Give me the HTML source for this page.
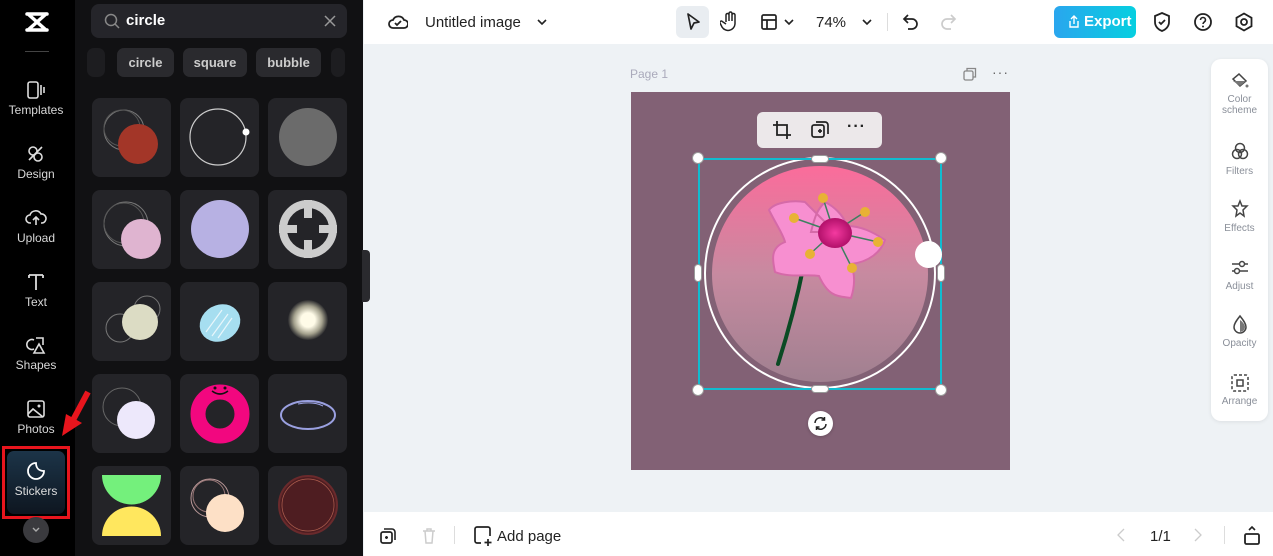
<!DOCTYPE html>
<html><head><meta charset="utf-8"><style>
*{box-sizing:border-box;margin:0;padding:0}
body{width:1273px;height:556px;overflow:hidden;font-family:"Liberation Sans",sans-serif;background:#eef2f5;position:relative}
.abs{position:absolute}
.rail{left:0;top:0;width:75px;height:556px;background:#000}
.ri{position:absolute;left:0;width:72px;text-align:center;color:#d8d8d8;font-size:12px}
.ri svg{display:block;margin:0 auto 3px}
.panel{left:75px;top:0;width:288px;height:556px;background:#111113}
.cell{position:absolute;width:79px;height:79px;background:#242428;border-radius:8px;overflow:hidden}
.chip{position:absolute;top:48px;height:29px;background:#2a2a2e;border-radius:7px;color:#ccc;font-size:13px;font-weight:bold;line-height:29px;text-align:center}
.top{left:364px;top:0;width:909px;height:44px;background:#fff}
.bot{left:364px;top:512px;width:909px;height:44px;background:#fff}
.rp{left:1211px;top:59px;width:57px;height:362px;background:#fff;border-radius:10px;box-shadow:0 1px 4px rgba(0,0,0,.08)}
.rpi{position:absolute;left:0;width:57px;text-align:center;font-size:10px;color:#8a8f99;line-height:11px}
.rpi svg{display:block;margin:0 auto 3px}
.h{position:absolute;width:12px;height:12px;border-radius:50%;background:#fff;border:1px solid #999}
</style></head><body>

<div class="abs rail">
 <svg class="abs" style="left:24px;top:10px" width="26" height="24" viewBox="0 0 26 24"><path d="M3 4h20M3 20h20M4 4l18 16M22 4L4 20" stroke="#fff" stroke-width="3.5" fill="none" stroke-linecap="round"/></svg>
 <div class="abs" style="left:25px;top:51px;width:24px;height:1px;background:#444"></div>
 <div class="ri" style="top:80px"><svg width="22" height="20" viewBox="0 0 22 20"><rect x="3" y="2" width="10" height="16" rx="2" stroke="#ddd" stroke-width="1.6" fill="none"/><path d="M16 5v10M19 7v6" stroke="#ddd" stroke-width="1.6"/></svg>Templates</div>
 <div class="ri" style="top:144px"><svg width="22" height="20" viewBox="0 0 22 20"><circle cx="8" cy="7" r="4" stroke="#ddd" stroke-width="1.6" fill="none"/><circle cx="13" cy="13" r="4" stroke="#ddd" stroke-width="1.6" fill="none"/><path d="M4 16L17 3" stroke="#ddd" stroke-width="1.6"/></svg>Design</div>
 <div class="ri" style="top:208px"><svg width="22" height="20" viewBox="0 0 22 20"><path d="M6 15H5a4 4 0 010-8 6 6 0 0111-1 4 4 0 011 9h-1M11 17V9M8 12l3-3 3 3" stroke="#ddd" stroke-width="1.6" fill="none"/></svg>Upload</div>
 <div class="ri" style="top:272px"><svg width="22" height="20" viewBox="0 0 22 20"><path d="M4 3h14M11 3v15M4 3v3M18 3v3" stroke="#ddd" stroke-width="1.8" fill="none"/></svg>Text</div>
 <div class="ri" style="top:335px"><svg width="22" height="20" viewBox="0 0 22 20"><path d="M9 5a5 5 0 100 9M11 3h7v7M14 9l5 9H9z" stroke="#ddd" stroke-width="1.6" fill="none"/></svg>Shapes</div>
 <div class="ri" style="top:399px"><svg width="22" height="20" viewBox="0 0 22 20"><rect x="3" y="2" width="16" height="16" rx="2" stroke="#ddd" stroke-width="1.6" fill="none"/><path d="M3 15l5-5 10 8" stroke="#ddd" stroke-width="1.6" fill="none"/><circle cx="14" cy="7" r="1.5" fill="#ddd"/></svg>Photos</div>
 <div class="abs" style="left:2px;top:446px;width:68px;height:73px;border:3px solid #e8151d"></div>
 <div class="abs" style="left:7px;top:451px;width:58px;height:63px;border-radius:7px;background:linear-gradient(#1c3448,#0e1620)"></div>
 <div class="ri" style="top:461px"><svg width="22" height="20" viewBox="0 0 22 20"><path d="M11 2a8 8 0 108 8c-5 0-8-3-8-8z" stroke="#fff" stroke-width="1.8" fill="none"/></svg><span style="color:#ddd">Stickers</span></div>
 <div class="abs" style="left:23px;top:517px;width:26px;height:26px;border-radius:50%;background:#3a3a3e"></div>
 <svg class="abs" style="left:31px;top:525px" width="10" height="10"><path d="M2 3l3 3 3-3" stroke="#aaa" stroke-width="1.4" fill="none"/></svg>
</div>

<div class="abs panel">
 <div class="abs" style="left:16px;top:4px;width:256px;height:34px;background:#25252a;border-radius:8px"></div>
 <svg class="abs" style="left:29px;top:13px" width="16" height="16"><circle cx="7" cy="7" r="5.5" stroke="#888" stroke-width="1.5" fill="none"/><path d="M11 11l4 4" stroke="#888" stroke-width="1.5"/></svg>
 <div class="abs" style="left:51px;top:12px;color:#fff;font-size:15px;font-weight:bold">circle</div>
 <svg class="abs" style="left:249px;top:15px" width="12" height="12"><path d="M1 1l10 10M11 1L1 11" stroke="#999" stroke-width="1.5"/></svg>
 <div class="chip" style="left:12px;width:18px;opacity:.5"></div>
 <div class="chip" style="left:42px;width:57px">circle</div>
 <div class="chip" style="left:108px;width:64px">square</div>
 <div class="chip" style="left:181px;width:65px">bubble</div>
 <div class="chip" style="left:256px;width:14px;opacity:.5"></div>

 <div class="cell" style="left:17px;top:98px"><svg width="79" height="79"><circle cx="32" cy="32" r="20" stroke="#777" fill="none"/><circle cx="30" cy="30" r="18" stroke="#555" fill="none"/><circle cx="46" cy="46" r="20" fill="#a33628"/></svg></div>
 <div class="cell" style="left:105px;top:98px"><svg width="79" height="79"><circle cx="38" cy="39" r="28" stroke="#ccc" stroke-width="1.2" fill="none"/><circle cx="66" cy="34" r="3.5" fill="#fff"/></svg></div>
 <div class="cell" style="left:193px;top:98px"><svg width="79" height="79"><circle cx="40" cy="39" r="29" fill="#6b6b6b"/></svg></div>

 <div class="cell" style="left:17px;top:190px"><svg width="79" height="79"><circle cx="34" cy="34" r="22" stroke="#777" fill="none"/><circle cx="32" cy="33" r="20" stroke="#555" fill="none"/><circle cx="49" cy="49" r="20" fill="#dfb4d0"/></svg></div>
 <div class="cell" style="left:105px;top:190px"><svg width="79" height="79"><circle cx="40" cy="39" r="29" fill="#b7b1e3"/></svg></div>
 <div class="cell" style="left:193px;top:190px"><svg width="79" height="79"><circle cx="40" cy="39" r="25" stroke="#ccc" stroke-width="8" fill="none"/><path d="M40 10v18M40 50v18M11 39h18M51 39h18" stroke="#ccc" stroke-width="8"/></svg></div>

 <div class="cell" style="left:17px;top:282px"><svg width="79" height="79"><circle cx="55" cy="27" r="13" stroke="#777" fill="none"/><circle cx="28" cy="46" r="14" stroke="#777" fill="none"/><circle cx="48" cy="40" r="18" fill="#dcdcc4"/></svg></div>
 <div class="cell" style="left:105px;top:282px"><svg width="79" height="79"><ellipse cx="40" cy="41" rx="21" ry="18" fill="#a6def0" transform="rotate(-30 40 41)"/><path d="M26 50l16-22M32 54l16-22M38 56l14-20" stroke="#e8f6fb" stroke-width="1.2"/></svg></div>
 <div class="cell" style="left:193px;top:282px"><div style="position:absolute;left:20px;top:18px;width:40px;height:40px;border-radius:50%;background:radial-gradient(#fffbe8 25%,rgba(250,245,210,.6) 50%,rgba(36,36,40,0) 72%)"></div></div>

 <div class="cell" style="left:17px;top:374px"><svg width="79" height="79"><circle cx="30" cy="33" r="19" stroke="#666" fill="none"/><circle cx="44" cy="46" r="19" fill="#ede8fb"/></svg></div>
 <div class="cell" style="left:105px;top:374px"><svg width="79" height="79"><circle cx="40" cy="40" r="22" stroke="#f2077f" stroke-width="15" fill="none"/><circle cx="35" cy="14" r="1.5" fill="#111"/><circle cx="45" cy="14" r="1.5" fill="#111"/><path d="M32 17q8 6 16 0" stroke="#111" stroke-width="1.6" fill="none"/></svg></div>
 <div class="cell" style="left:193px;top:374px"><svg width="79" height="79"><ellipse cx="40" cy="41" rx="27" ry="14" stroke="#9aa0e0" stroke-width="2" fill="none"/><path d="M30 30q15-3 25 2" stroke="#9aa0e0" fill="none"/></svg></div>

 <div class="cell" style="left:17px;top:466px"><svg width="79" height="79"><path d="M10 9h59a29 29 0 01-59 0z" fill="#74f07c"/><path d="M10 70h59a29 29 0 00-59 0z" fill="#ffe75e"/></svg></div>
 <div class="cell" style="left:105px;top:466px"><svg width="79" height="79"><circle cx="30" cy="32" r="19" stroke="#b99" fill="none"/><circle cx="29" cy="30" r="16" stroke="#977" fill="none"/><circle cx="45" cy="47" r="19" fill="#fde0c6"/></svg></div>
 <div class="cell" style="left:193px;top:466px"><svg width="79" height="79"><circle cx="40" cy="39" r="29" fill="#4e1d21" stroke="#6a2a2c" stroke-width="2"/><circle cx="40" cy="39" r="26" stroke="#b06050" stroke-width=".7" fill="none"/></svg></div>
</div>
<svg class="abs" style="left:60px;top:388px" width="34" height="52"><path d="M28 4L12 34" stroke="#e8151d" stroke-width="6"/><path d="M2 48L6 26l16 9z" fill="#e8151d"/></svg>
<div class="abs" style="left:362px;top:250px;width:8px;height:52px;background:#2a2a2e;border-radius:0 4px 4px 0"></div>

<div class="abs top">
 <svg class="abs" style="left:24px;top:12px" width="20" height="20" viewBox="0 0 20 20"><path d="M5 16a4 4 0 010-8 6 6 0 0111 0 4 4 0 010 8z" stroke="#222" stroke-width="1.8" fill="none"/><path d="M7 11l2 2 4-4" stroke="#222" stroke-width="1.8" fill="none"/></svg>
 <div class="abs" style="left:61px;top:14px;font-size:15px;color:#222">Untitled image</div>
 <svg class="abs" style="left:172px;top:17px" width="12" height="10"><path d="M2 3l4 4 4-4" stroke="#222" stroke-width="1.6" fill="none"/></svg>
 <div class="abs" style="left:312px;top:6px;width:33px;height:32px;background:#e9edf1;border-radius:6px"></div>
 <svg class="abs" style="left:320px;top:12px" width="18" height="20"><path d="M4 2l11 8-5 1-3 6z" stroke="#222" stroke-width="1.7" fill="none" stroke-linejoin="round"/></svg>
 <svg class="abs" style="left:356px;top:11px" width="20" height="22" viewBox="0 0 20 22"><path d="M6 11V4a1.5 1.5 0 013 0v6V2.5a1.5 1.5 0 013 0V10V4a1.5 1.5 0 013 0v9a7 7 0 01-13 3l-2-4a1.4 1.4 0 012.4-1.4L6 13" stroke="#222" stroke-width="1.5" fill="none"/></svg>
 <svg class="abs" style="left:396px;top:13px" width="18" height="18"><rect x="2" y="2" width="14" height="14" rx="1.5" stroke="#222" stroke-width="1.7" fill="none"/><path d="M2 7h14M7 7v9" stroke="#222" stroke-width="1.7"/></svg>
 <svg class="abs" style="left:419px;top:17px" width="12" height="10"><path d="M2 3l4 4 4-4" stroke="#222" stroke-width="1.6" fill="none"/></svg>
 <div class="abs" style="left:452px;top:14px;font-size:15px;color:#222">74%</div>
 <svg class="abs" style="left:497px;top:17px" width="12" height="10"><path d="M2 3l4 4 4-4" stroke="#222" stroke-width="1.6" fill="none"/></svg>
 <div class="abs" style="left:523px;top:13px;width:1px;height:18px;background:#ddd"></div>
 <svg class="abs" style="left:538px;top:12px" width="18" height="20"><path d="M6 3L2 7l4 4M2 7h8a5 5 0 010 10H6" stroke="#222" stroke-width="1.7" fill="none"/></svg>
 <svg class="abs" style="left:575px;top:12px" width="18" height="20"><path d="M12 3l4 4-4 4M16 7H8a5 5 0 000 10h4" stroke="#ccc" stroke-width="1.7" fill="none"/></svg>
 <div class="abs" style="left:690px;top:6px;width:82px;height:32px;border-radius:6px;background:linear-gradient(90deg,#2aa6ee,#06cfe0);color:#fff;font-weight:bold;font-size:15px;line-height:32px;padding-left:30px">Export</div>
 <svg class="abs" style="left:703px;top:14px" width="14" height="15"><path d="M3 7v6h8V7M7 10V2M4 5l3-3 3 3" stroke="#fff" stroke-width="1.4" fill="none"/></svg>
 <svg class="abs" style="left:788px;top:11px" width="20" height="22"><path d="M10 2l7 3v6c0 5-4 8-7 9-3-1-7-4-7-9V5z" stroke="#222" stroke-width="1.8" fill="none"/><path d="M7 11l2 2 4-4" stroke="#222" stroke-width="1.8" fill="none"/></svg>
 <svg class="abs" style="left:829px;top:12px" width="20" height="20"><circle cx="10" cy="10" r="8" stroke="#222" stroke-width="1.8" fill="none"/><path d="M7.5 8a2.5 2.5 0 115 0c0 2-2.5 2-2.5 4" stroke="#222" stroke-width="1.6" fill="none"/><circle cx="10" cy="14.5" r="1" fill="#222"/></svg>
 <svg class="abs" style="left:870px;top:12px" width="20" height="20"><path d="M10 1.5l7.5 4.3v8.4L10 18.5l-7.5-4.3V5.8z" stroke="#222" stroke-width="1.8" fill="none"/><circle cx="10" cy="10" r="3" stroke="#222" stroke-width="1.8" fill="none"/></svg>
</div>

<div class="abs" style="left:630px;top:67px;font-size:12px;color:#aab">Page 1</div>
<svg class="abs" style="left:963px;top:67px" width="14" height="14"><rect x="1" y="4" width="9" height="9" rx="1.5" stroke="#888" stroke-width="1.3" fill="none"/><path d="M4 4V1.5h8.5V10H10" stroke="#888" stroke-width="1.3" fill="none"/></svg>
<div class="abs" style="left:992px;top:64px;font-size:14px;color:#666;letter-spacing:1px">···</div>

<div class="abs" style="left:631px;top:92px;width:379px;height:378px;background:#826175"></div>
<svg class="abs" style="left:631px;top:92px" width="379" height="378">
 <defs><linearGradient id="g" x1="0" y1="0" x2="0" y2="1"><stop offset="0" stop-color="#fb6c9b"/><stop offset=".5" stop-color="#c78aa0"/><stop offset="1" stop-color="#a08090"/></linearGradient>
 <radialGradient id="c"><stop offset="0" stop-color="#f43aa0"/><stop offset="1" stop-color="#b2106a"/></radialGradient></defs>
 <circle cx="189" cy="181" r="115" stroke="#fff" stroke-width="2" fill="none"/>
 <circle cx="189" cy="182" r="108" fill="url(#g)"/>
 <path d="M173 172q-10 50-26 100" stroke="#0b4a24" stroke-width="4" fill="none" stroke-linecap="round"/>
 <path d="M204 140l-30-30c-12-2-30 0-36 8 8 16 14 24 16 32-16 6-12 20-10 30 14 6 32 2 44 4 10 22 20 20 32 22 4-12 4-24 0-34 18-2 30-12 34-24-12-8-24-14-38-14-4-12-14-20-22-24-8 8-10 14-14 30z" fill="#f78fd0" stroke="#d56aa8" stroke-width="2"/>
 <g stroke="#3d8060" stroke-width="1.5"><path d="M203 140L192 106M203 140l31-20M203 140l-40-14M203 140l44 10M203 140l-24 22M203 140l18 36"/></g>
 <g fill="#e8b235"><circle cx="192" cy="106" r="5"/><circle cx="234" cy="120" r="5"/><circle cx="163" cy="126" r="5"/><circle cx="247" cy="150" r="5"/><circle cx="179" cy="162" r="5"/><circle cx="221" cy="176" r="5"/></g>
 <ellipse cx="204" cy="141" rx="17" ry="15" fill="url(#c)"/>
</svg>
<div class="abs" style="left:757px;top:112px;width:125px;height:36px;background:#ece8ea;border-radius:6px"></div>
<svg class="abs" style="left:772px;top:120px" width="20" height="20"><path d="M5 1v14h14M1 5h14v14" stroke="#222" stroke-width="1.8" fill="none"/></svg>
<svg class="abs" style="left:810px;top:120px" width="20" height="20"><rect x="2" y="5" width="12" height="12" rx="2" stroke="#222" stroke-width="1.7" fill="none"/><path d="M6 2h9a3 3 0 013 3v9M8 11h4M10 9v4" stroke="#222" stroke-width="1.7" fill="none"/></svg>
<div class="abs" style="left:847px;top:118px;font-size:16px;font-weight:bold;color:#222;letter-spacing:1px">···</div>

<div class="abs" style="left:698px;top:158px;width:244px;height:232px;border:2px solid #12bcd0"></div>
<div class="h" style="left:692px;top:152px"></div><div class="h" style="left:935px;top:152px"></div>
<div class="h" style="left:692px;top:384px"></div><div class="h" style="left:935px;top:384px"></div>
<div class="abs" style="left:811px;top:155px;width:18px;height:8px;border-radius:4px;background:#fff;border:1px solid #999"></div>
<div class="abs" style="left:811px;top:385px;width:18px;height:8px;border-radius:4px;background:#fff;border:1px solid #999"></div>
<div class="abs" style="left:694px;top:264px;width:8px;height:18px;border-radius:4px;background:#fff;border:1px solid #999"></div>
<div class="abs" style="left:937px;top:264px;width:8px;height:18px;border-radius:4px;background:#fff;border:1px solid #999"></div>
<div class="abs" style="left:915px;top:241px;width:27px;height:27px;border-radius:50%;background:#fff"></div>
<div class="abs" style="left:808px;top:411px;width:25px;height:25px;border-radius:50%;background:#fff;box-shadow:0 1px 3px rgba(0,0,0,.2)"></div>
<svg class="abs" style="left:813px;top:416px" width="15" height="15"><path d="M2 7a5.5 5.5 0 019.5-3.5M13 8a5.5 5.5 0 01-9.5 3.5M11.5 1v3h-3M3.5 14v-3h3" stroke="#222" stroke-width="1.5" fill="none"/></svg>

<div class="abs rp">
 <div class="rpi" style="top:12px"><svg width="20" height="20"><path d="M9 3l7 7-6 5-7-7z" stroke="#444" stroke-width="1.5" fill="none"/><path d="M3 10h13l-6 5z" fill="#777"/><circle cx="17" cy="15" r="1.5" fill="#777"/></svg>Color<br>scheme</div>
 <div class="rpi" style="top:82px"><svg width="20" height="22"><circle cx="10" cy="7" r="4.5" stroke="#444" stroke-width="1.5" fill="none"/><circle cx="7" cy="13" r="4.5" stroke="#444" stroke-width="1.5" fill="none"/><circle cx="13" cy="13" r="4.5" stroke="#444" stroke-width="1.5" fill="none"/></svg>Filters</div>
 <div class="rpi" style="top:140px"><svg width="20" height="21"><path d="M10 2l2 5 5 0-4 4 1 6-4-3-4 3 1-6-4-4 5 0z" stroke="#444" stroke-width="1.5" fill="none"/></svg>Effects</div>
 <div class="rpi" style="top:198px"><svg width="20" height="21"><path d="M2 7h16M2 14h16" stroke="#444" stroke-width="1.5"/><circle cx="12" cy="7" r="2.5" fill="#fff" stroke="#444" stroke-width="1.5"/><circle cx="7" cy="14" r="2.5" fill="#fff" stroke="#444" stroke-width="1.5"/></svg>Adjust</div>
 <div class="rpi" style="top:255px"><svg width="20" height="21"><path d="M10 2c4 5 6 8 6 11a6 6 0 01-12 0c0-3 2-6 6-11z" stroke="#444" stroke-width="1.5" fill="none"/><path d="M10 6v12a5 5 0 005-5c0-2-2-5-5-7z" fill="#777"/></svg>Opacity</div>
 <div class="rpi" style="top:313px"><svg width="20" height="21"><rect x="2" y="3" width="16" height="16" rx="2" stroke="#444" stroke-width="1.5" stroke-dasharray="3 2" fill="none"/><rect x="7" y="8" width="6" height="6" stroke="#444" stroke-width="1.5" fill="none"/></svg>Arrange</div>
</div>

<div class="abs bot">
 <svg class="abs" style="left:15px;top:15px" width="18" height="18"><rect x="2" y="5" width="11" height="11" rx="2" stroke="#222" stroke-width="1.7" fill="none"/><path d="M5 2h8a3 3 0 013 3v8M6 10.5h3M7.5 9v3" stroke="#222" stroke-width="1.6" fill="none"/></svg>
 <svg class="abs" style="left:57px;top:15px" width="16" height="18"><path d="M2 4h12M6 4V2h4v2M4 4l1 12h6l1-12" stroke="#ccc" stroke-width="1.5" fill="none"/></svg>
 <div class="abs" style="left:90px;top:14px;width:1px;height:18px;background:#ddd"></div>
 <svg class="abs" style="left:109px;top:13px" width="20" height="22"><path d="M8 18H4a2 2 0 01-2-2V4a2 2 0 012-2h11a2 2 0 012 2v7M15 14v7M11.5 17.5h7" stroke="#222" stroke-width="1.7" fill="none"/></svg>
 <div class="abs" style="left:133px;top:16px;font-size:15px;color:#222">Add page</div>
 <svg class="abs" style="left:752px;top:16px" width="10" height="14"><path d="M8 1L2 7l6 6" stroke="#ccc" stroke-width="1.3" fill="none"/></svg>
 <div class="abs" style="left:786px;top:16px;font-size:15px;color:#222">1/1</div>
 <svg class="abs" style="left:829px;top:16px" width="10" height="14"><path d="M2 1l6 6-6 6" stroke="#ccc" stroke-width="1.3" fill="none"/></svg>
 <div class="abs" style="left:860px;top:14px;width:1px;height:18px;background:#ddd"></div>
 <svg class="abs" style="left:878px;top:12px" width="20" height="22"><rect x="3" y="10" width="14" height="10" rx="1.5" stroke="#222" stroke-width="1.8" fill="none"/><path d="M7 6l3-3 3 3" stroke="#222" stroke-width="1.6" fill="none"/></svg>
</div>
</body></html>
